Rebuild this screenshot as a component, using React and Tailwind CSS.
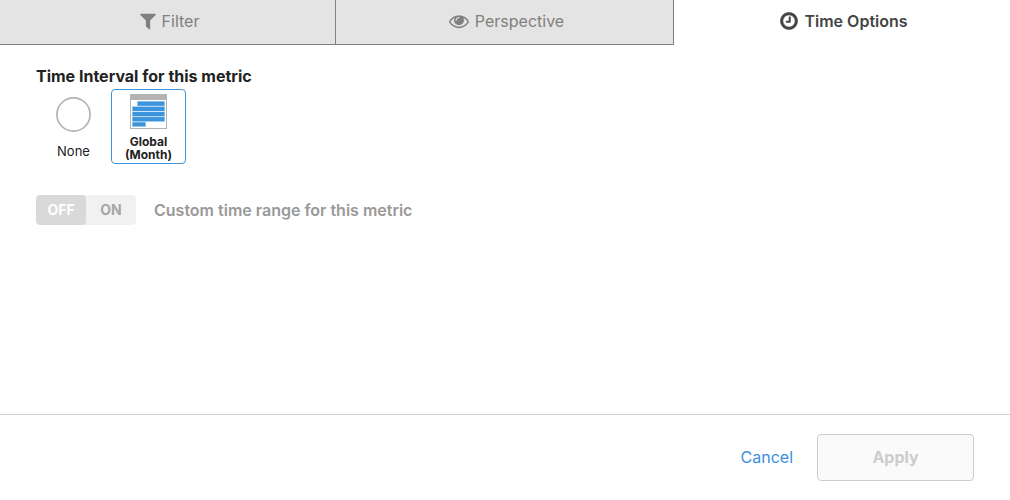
import { useState } from "react";

function FilterIcon() {
  return (
    <svg viewBox="192 0 1408 1792" className="h-5 w-4" fill="currentColor" aria-hidden="true">
      <path d="M1595 295q17 41-14 70l-493 493v742q0 42-39 59-13 5-25 5-27 0-45-19l-256-256q-19-19-19-45v-486l-493-493q-31-29-14-70 17-39 59-39h1280q42 0 59 39z" />
    </svg>
  );
}

function EyeIcon() {
  return (
    <svg viewBox="0 0 1792 1792" className="h-5 w-5" fill="currentColor" aria-hidden="true">
      <path d="M1664 960q-152-236-381-353 61 104 61 225 0 185-131.5 316.5t-316.5 131.5-316.5-131.5-131.5-316.5q0-121 61-225-229 117-381 353 133 205 333.5 326.5t434.5 121.5 434.5-121.5 333.5-326.5zm-720-384q0-20-14-34t-34-14q-125 0-214.5 89.5t-89.5 214.5q0 20 14 34t34 14 34-14 14-34q0-86 61-147t147-61q20 0 34-14t14-34zm848 384q0 34-20 69-140 230-376.5 368.5t-499.5 138.5-499.5-139-376.5-368q-20-35-20-69t20-69q140-229 376.5-368t499.5-139 499.5 139 376.5 368q20 35 20 69z" />
    </svg>
  );
}

function ClockIcon() {
  return (
    <svg viewBox="98 0 1596 1792" className="h-5 w-[18px]" fill="currentColor" stroke="currentColor" strokeWidth="50" aria-hidden="true">
      <path d="M1024 544v448q0 14-9 23t-23 9h-320q-14 0-23-9t-9-23v-64q0-14 9-23t23-9h224v-352q0-14 9-23t23-9h64q14 0 23 9t9 23zm416 352q0-148-73-273t-198-198-273-73-273 73-198 198-73 273 73 273 198 198 273 73 273-73 198-198 73-273zm224 0q0 209-103 385.5t-279.5 279.5-385.5 103-385.5-103-279.5-279.5-103-385.5 103-385.5 279.5-279.5 385.5-103 385.5 103 279.5 279.5 103 385.5z" />
    </svg>
  );
}

function CircleIcon() {
  return (
    <svg viewBox="0 0 37 35" className="h-[35px] w-[37px]" aria-hidden="true">
      <circle cx="18.5" cy="17.5" r="16.6" fill="none" stroke="#b3b3b3" strokeWidth="1.7" />
    </svg>
  );
}

function MonthIcon() {
  return (
    <svg viewBox="0 0 37 35" className="h-[35px] w-[37px]" aria-hidden="true">
      <rect x="0.5" y="0.5" width="36" height="34" fill="#fff" stroke="#b3b3b3" />
      <rect width="37" height="6" fill="#b3b3b3" />
      <g fill="#cfe4f5">
        <rect x="7" y="7" width="28" height="6" />
        <rect x="2" y="12" width="33" height="16" />
        <rect x="2" y="27" width="14" height="6" />
      </g>
      <g fill="#3c95dc">
        <rect x="7.5" y="7.5" width="27" height="4.3" />
        <rect x="2.5" y="12.8" width="32" height="4.2" />
        <rect x="2.5" y="18" width="32" height="4.2" />
        <rect x="2.5" y="23.1" width="32" height="4.2" />
        <rect x="2.5" y="28.3" width="13" height="4.1" />
      </g>
    </svg>
  );
}

function Tab({ icon, label, selected, divider }) {
  return (
    <button
      type="button"
      role="tab"
      aria-selected={selected}
      className={
        "flex items-start justify-center gap-1.5 pt-[11px] pl-1 text-base leading-5 " +
        (selected ? "bg-white font-semibold text-[#444] " : "border-b border-[#808080] bg-[#e4e4e4] text-[#808080] ") +
        (divider ? "border-r" : "")
      }
    >
      {icon}
      <span>{label}</span>
    </button>
  );
}

function IntervalOption({ value, current, onChange, icon, children }) {
  const selected = value === current;
  return (
    <label
      className={
        "flex h-[75px] w-[75px] cursor-pointer flex-col items-center rounded border text-center leading-[13px] text-[#222] " +
        (selected ? "border-[#3c95dc] pt-1 text-xs leading-[13px] font-bold" : "border-transparent pt-[7px] text-[13px] leading-[13px]")
      }
    >
      <input
        type="radio"
        name="interval"
        value={value}
        checked={selected}
        onChange={() => onChange(value)}
        className="sr-only"
      />
      {icon}
      <span className={selected ? "mt-1.5" : "mt-[13px]"}>{children}</span>
    </label>
  );
}

export default function App() {
  const [interval, setInterval] = useState("global");
  return (
    <div className="flex min-h-screen flex-col bg-white font-['Inter',sans-serif]">
      <div role="tablist" className="grid h-[45px] grid-cols-[336fr_338fr_336fr]">
        <Tab icon={<FilterIcon />} label="Filter" selected={false} divider />
        <Tab icon={<EyeIcon />} label="Perspective" selected={false} divider />
        <Tab icon={<ClockIcon />} label="Time Options" selected />
      </div>

      <main className="flex-1 px-9 pt-[18px]">
        <fieldset>
          <legend className="text-base leading-[26px] font-bold text-[#222]">
            Time Interval for this metric
          </legend>
          <div className="flex">
            <IntervalOption value="none" current={interval} onChange={setInterval} icon={<CircleIcon />}>
              None
            </IntervalOption>
            <IntervalOption value="global" current={interval} onChange={setInterval} icon={<MonthIcon />}>
              Global
              <br />
              (Month)
            </IntervalOption>
          </div>
        </fieldset>

        <label className="mt-[31px] flex items-center">
          <input type="checkbox" role="switch" disabled className="sr-only" />
          <span
            aria-hidden="true"
            className="flex h-[30px] w-[100px] overflow-hidden rounded bg-[#f1f1f1] text-center text-sm leading-[30px] font-bold"
          >
            <span className="flex-1 rounded bg-[#d9d9d9] text-white">OFF</span>
            <span className="flex-1 text-[#a6a6a6]">ON</span>
          </span>
          <span className="ml-[18px] text-base leading-6 font-semibold text-[#999]">
            Custom time range for this metric
          </span>
        </label>
      </main>

      <footer className="flex items-center justify-end gap-6 border-t border-[#d0d0d0] px-9 py-[19px] text-base leading-6">
        <button type="button" className="cursor-pointer pb-0.5 text-[#3c8fdc]">
          Cancel
        </button>
        <button
          type="button"
          disabled
          className="h-[47px] w-[157px] rounded border border-[#ccc] bg-[#fafafa] pb-0.5 font-bold text-[#ccc]"
        >
          Apply
        </button>
      </footer>
    </div>
  );
}
